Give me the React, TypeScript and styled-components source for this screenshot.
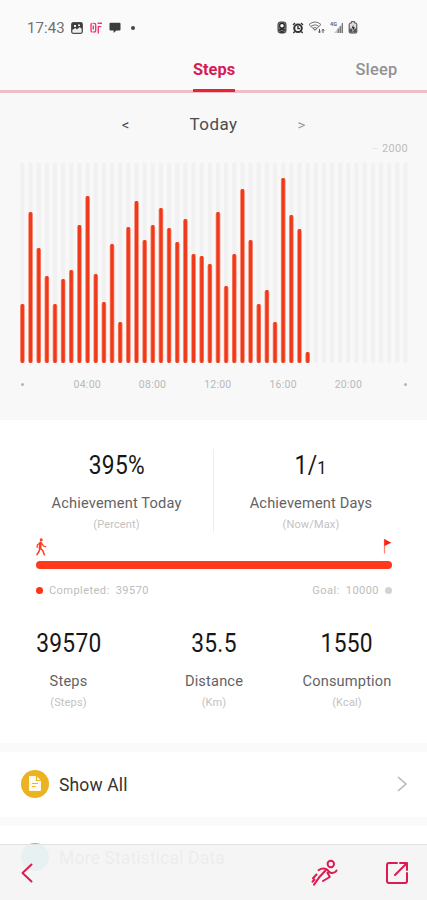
import React from "react";
import styled, { createGlobalStyle } from "styled-components";

const GlobalStyle = createGlobalStyle`
  * { box-sizing: border-box; }
  body { margin: 0; background: #fff; font-family: Roboto, "Liberation Sans", sans-serif; }
`;

const Screen = styled.div`
  position: relative;
  width: 427px;
  height: 900px;
  overflow: hidden;
  background: #fff;
`;

const Header = styled.header`
  background: #fafafa;
`;

const StatusBar = styled.div`
  display: flex;
  align-items: center;
  justify-content: space-between;
  height: 55px;
  padding: 0 69px 0 27px;
`;

const StatusGroup = styled.div<{ $gap: number }>`
  display: flex;
  align-items: center;
  gap: ${(p) => p.$gap}px;
`;

const Clock = styled.span`
  width: 38px;
  margin-right: -1px;
  font-size: 15px;
  letter-spacing: 0.1px;
  color: #707070;
  white-space: nowrap;
`;

const Dot = styled.span<{ $size: number; $color: string; $indent?: number }>`
  flex: none;
  width: ${(p) => p.$size}px;
  height: ${(p) => p.$size}px;
  margin-left: ${(p) => p.$indent ?? 0}px;
  border-radius: 50%;
  background: ${(p) => p.$color};
`;

const Tabs = styled.nav`
  display: grid;
  grid-template-columns: 193px 42px 1fr;
  height: 38px;
  border-bottom: 3px solid #edbfc8;
`;

const Tab = styled.button<{ $active?: boolean }>`
  grid-column: ${(p) => (p.$active ? 2 : 3)};
  justify-self: ${(p) => (p.$active ? "stretch" : "end")};
  height: 37px;
  margin: 0 ${(p) => (p.$active ? 0 : 29.5)}px 0 0;
  padding: 0 0 5px;
  border: 0;
  border-bottom: 3px solid ${(p) => (p.$active ? "#e32636" : "transparent")};
  background: none;
  color: ${(p) => (p.$active ? "#d81b55" : "#929292")};
  font: ${(p) => (p.$active ? 700 : 500)} 16.4px/29px Roboto, sans-serif;
  letter-spacing: ${(p) => (p.$active ? 0 : 0.25)}px;
  display: flex;
  justify-content: center;
`;

const ChartSection = styled.section`
  height: 327px;
  background: #f8f8f8;
`;

const DateRow = styled.div`
  display: grid;
  grid-template-columns: 20px 156px 20px;
  justify-content: center;
  align-items: center;
  text-align: center;
  height: 63px;
`;

const DateText = styled.span`
  padding-bottom: 2px;
  font-size: 17px;
  letter-spacing: 0.4px;
  color: #4c4c4c;
`;

const Step = styled.span<{ $color: string }>`
  font-size: 15px;
  color: ${(p) => p.$color};
`;

const Scale = styled.div`
  display: flex;
  justify-content: flex-end;
  gap: 3px;
  height: 20px;
  margin-top: -13px;
  padding-right: 19px;
  font-size: 11px;
  line-height: 11px;
  letter-spacing: 0.3px;
  color: #bdbdbd;
`;

const Dash = styled.span`
  color: #e4e4e4;
`;

const Plot = styled.svg`
  display: block;
`;

const Axis = styled.div`
  display: grid;
  grid-template-columns: 32.6px repeat(5, 65.3px) 51px;
  margin-top: 15px;
  padding-left: 22px;
  align-items: center;
  font-size: 10.5px;
  line-height: 13px;
  letter-spacing: 0.25px;
  color: #b8b8b8;
`;

const Hour = styled.span`
  text-align: center;
`;

const AxisEnd = styled.span<{ $end?: boolean }>`
  width: 3px;
  height: 3px;
  border-radius: 50%;
  background: #b4b4b4;
  margin-left: ${(p) => (p.$end ? 23 : -1)}px;
`;

const Summary = styled.section`
  height: 323px;
  padding-top: 29px;
`;

const Halves = styled.div`
  display: grid;
  grid-template-columns: 213px 1px 213px;
  height: 83px;
`;

const Divider = styled.div`
  background: #ededed;
`;

const Metric = styled.div<{ $shift?: number }>`
  display: flex;
  flex-direction: column;
  align-items: center;
  margin-left: ${(p) => p.$shift ?? 0}px;
`;

const Value = styled.div`
  height: 34px;
  font-size: 25px;
  line-height: 34px;
  letter-spacing: 0.3px;
  color: #171717;
  transform: scaleX(0.91);
`;

const Small = styled.span`
  font-size: 18px;
`;

const Label = styled.div`
  margin-top: 10px;
  font-size: 14.6px;
  line-height: 20px;
  letter-spacing: 0.17px;
  color: #636363;
`;

const Unit = styled.div`
  margin-top: 5px;
  font-size: 11px;
  line-height: 13px;
  letter-spacing: 0.15px;
  color: #c2c2c2;
`;

const Goal = styled.div`
  padding: 6px 35px 0 36px;
`;

const Row = styled.div`
  display: flex;
  align-items: center;
  justify-content: space-between;
`;

const Track = styled.div`
  height: 8px;
  margin: 5px 0 14px;
  border-radius: 4px;
  background: #ff3a1c;
`;

const Legend = styled.div`
  display: flex;
  align-items: center;
  gap: 6px;
  height: 14px;
  font-size: 11px;
  letter-spacing: 0.45px;
  word-spacing: 3px;
  color: #bdbdbd;
`;

const Thirds = styled.div`
  display: grid;
  grid-template-columns: 137px 154px 112px;
  padding-top: 30px;
`;

const Gap = styled.div`
  height: 9px;
  background: #fafafa;
`;

const ListRow = styled.div<{ $height: number }>`
  display: flex;
  align-items: center;
  height: ${(p) => p.$height}px;
  padding: 0 19px 2px 21px;
`;

const Badge = styled.span<{ $color: string }>`
  display: flex;
  align-items: center;
  justify-content: center;
  width: 28px;
  height: 28px;
  border-radius: 50%;
  background: ${(p) => p.$color};
`;

const ListText = styled.span<{ $muted?: boolean }>`
  flex: 1;
  margin-left: 10px;
  padding-top: 3px;
  font-size: 17.5px;
  letter-spacing: 0.15px;
  color: ${(p) => (p.$muted ? "#909090" : "#333")};
`;

const BottomBar = styled.footer`
  position: absolute;
  left: 0;
  right: 0;
  bottom: 0;
  display: flex;
  align-items: center;
  height: 56px;
  padding: 0 18px 0 19px;
  border-top: 1px solid #e2e2e2;
  background: rgba(244, 244, 244, 0.92);
`;

const BarIcon = styled.svg<{ $push?: boolean }>`
  flex: none;
  margin-left: ${(p) => (p.$push ? "auto" : 0)};
  margin-right: ${(p) => (p.$push ? 47 : 0)}px;
  fill: none;
  stroke: #dc1c50;
  stroke-width: 2;
  stroke-linecap: round;
  stroke-linejoin: round;
`;

const heights = [
  59, 151, 115, 87, 59, 84, 93, 138, 167, 89, 61, 119, 41, 136, 162, 123, 138, 155, 135, 121, 144,
  109, 107, 99, 151, 77, 109, 174, 123, 59, 73, 41, 185, 148, 134, 11,
];
const SLOT_COUNT = 48;
const FIRST_CENTER = 22.4;
const PITCH = 8.15;
const hours = ["04:00", "08:00", "12:00", "16:00", "20:00"];

const totals = [
  { value: "39570", label: "Steps", unit: "(Steps)" },
  { value: "35.5", label: "Distance", unit: "(Km)" },
  { value: "1550", label: "Consumption", unit: "(Kcal)" },
];

const StepsChart = () => (
  <Plot width="427" height="200" viewBox="0 0 427 200">
    {Array.from({ length: SLOT_COUNT }, (_, i) => (
      <rect key={i} x={FIRST_CENTER + i * PITCH - 2.1} y="0" width="4.2" height="200" fill="#f1f1f1" />
    ))}
    {heights.map((h, i) => (
      <g key={i}>
        <rect x={FIRST_CENTER + i * PITCH - 2.3} y={200 - h} width="4.6" height={h} rx="2" fill="#fa8068" />
        <rect x={FIRST_CENTER + i * PITCH - 1.5} y={200 - h} width="3" height={h} rx="1.4" fill="#ee3a1a" />
      </g>
    ))}
  </Plot>
);

const PhotoIcon = () => (
  <svg width="12" height="12" viewBox="0 0 12 12">
    <rect x=".7" y=".7" width="10.6" height="10.6" rx="1.5" fill="#eee" stroke="#4d4d4d" strokeWidth="1.3" />
    <path d="M1 1h10v6L8.7 5 6 7.5 4.5 6 1 8z" fill="#3e3e3e" />
    <path d="M3 3h2v2H3zM7 2.5h2V4H7z" fill="#eee" />
  </svg>
);

const FitIcon = () => (
  <svg width="12" height="12" viewBox="0 0 12 12" fill="none" stroke="#ec3a70" strokeWidth="1.4">
    <path d="M2.5 1.4Q1 1.4 1 3v5q0 2 1.5 2M3.3 1.4h.9q1.5 0 1.5 1.6v5q0 2-1.5 2h-.9M3.3 3.6v4M8.3 11.5V4.6h3M7.6 1.3H12" />
  </svg>
);

const ChatIcon = () => (
  <svg width="12" height="12" viewBox="0 0 12 12">
    <path d="M1.5.8h9q1 0 1 1v5.7q0 1-1 1H7.3L4.6 11V8.5H1.5q-1 0-1-1V1.8q0-1 1-1z" fill="#3c3c3c" />
  </svg>
);

const SaverIcon = () => (
  <svg width="10" height="13" viewBox="0 0 10 13">
    <rect x="1" y="1" width="8" height="11" rx="2.2" fill="#777" stroke="#444" />
    <circle cx="5" cy="4.7" r="2.3" fill="#fff" stroke="#222" strokeWidth="1.1" />
    <path d="M2 9.5 5 7.6l3 1.9M3.3 11h3.4" stroke="#222" strokeWidth="1.3" fill="none" />
  </svg>
);

const AlarmIcon = () => (
  <svg width="12" height="12" viewBox="0 0 12 12" fill="none" stroke="#343434">
    <circle cx="6" cy="6.3" r="3.8" strokeWidth="2" fill="#f5f5f5" />
    <path d="M6 4v2.6h2M1 3l2-1.9M11 3 9 1.1M2.7 9.5 1.4 11M9.3 9.5l1.3 1.5" strokeWidth="1.4" />
  </svg>
);

const WifiIcon = () => (
  <svg width="17" height="13" viewBox="0 0 17 13" fill="none" stroke="#777" strokeWidth="1">
    <path d="M1 3.5q6-5 12 0M3 5.5q4-3.2 8 0M5 7.3q2-1.5 4 0L7 9.2zM1 3.5l6 5.7 6-5.7" />
    <path d="M11.5 8v3.5M10.3 10.5l1.2 1.4 1.2-1.4M15 12V8.3M13.8 9.6 15 8.2l1.2 1.4" stroke="#555" />
  </svg>
);

const SignalText = styled.text`
  font: 700 5.5px Roboto, sans-serif;
  fill: #666;
`;

const SignalIcon = () => (
  <svg width="14" height="13" viewBox="0 0 14 13">
    <SignalText x="0" y="5">4G</SignalText>
    <path d="M4 12 13 2v10z" fill="#c7c7c7" />
    <path d="M8.3 12V7.5M10.3 12V5M12.4 12V2" stroke="#777" strokeWidth="1.2" />
  </svg>
);

const BatteryIcon = () => (
  <svg width="10" height="13" viewBox="0 0 10 13">
    <path d="M3.3.7h3.4v1.5h1.1q1 0 1 1V11q0 1-1 1H2.2q-1 0-1-1V3.2q0-1 1-1h1.1z" fill="#ddd" stroke="#444" />
    <path d="M1.5 7.5h7v4h-7z" fill="#555" />
    <path d="M5.7 2.7 3 7.5h1.7v3L7.5 6H5.7z" fill="#222" stroke="#fff" strokeWidth=".5" />
  </svg>
);

const WalkIcon = () => (
  <svg width="11" height="18" viewBox="0 0 11 18" fill="none" stroke="#ff3b1e" strokeLinecap="round" strokeLinejoin="round">
    <circle cx="5.2" cy="1.8" r="1.5" fill="#ff3b1e" stroke="none" />
    <path d="M4.6 4.7 4 10.2" strokeWidth="2.6" />
    <path d="M4 5 1.2 7v2.5M5.5 5.2 7.4 8l2.4.8" strokeWidth="1.2" />
    <path d="M3.8 10.4 3.2 13 1 16.7M4.7 10.4 7 13l1.3 3.7" strokeWidth="1.5" />
  </svg>
);

const FlagIcon = () => (
  <svg width="9" height="18" viewBox="0 0 9 18">
    <path d="M1.5 1V15.5" stroke="#ff8370" strokeWidth="1.2" />
    <path d="M1.3 1 8.4 4.8 1.3 8z" fill="#f7250e" />
  </svg>
);

export default function App() {
  return (
    <Screen>
      <GlobalStyle />
      <Header>
        <StatusBar>
          <StatusGroup $gap={7}>
            <Clock>17:43</Clock>
            <PhotoIcon />
            <FitIcon />
            <ChatIcon />
            <Dot $size={4} $color="#464646" $indent={3} />
          </StatusGroup>
          <StatusGroup $gap={4.5}>
            <SaverIcon />
            <AlarmIcon />
            <WifiIcon />
            <SignalIcon />
            <BatteryIcon />
          </StatusGroup>
        </StatusBar>
        <Tabs>
          <Tab $active>Steps</Tab>
          <Tab>Sleep</Tab>
        </Tabs>
      </Header>
      <ChartSection>
        <DateRow>
          <Step $color="#484848">&lt;</Step>
          <DateText>Today</DateText>
          <Step $color="#9c9c9c">&gt;</Step>
        </DateRow>
        <Scale>
          <Dash>–</Dash>
          <span>2000</span>
        </Scale>
        <StepsChart />
        <Axis>
          <AxisEnd />
          {hours.map((h) => (
            <Hour key={h}>{h}</Hour>
          ))}
          <AxisEnd $end />
        </Axis>
      </ChartSection>
      <Summary>
        <Halves>
          <Metric $shift={20}>
            <Value>395%</Value>
            <Label>Achievement Today</Label>
            <Unit>(Percent)</Unit>
          </Metric>
          <Divider />
          <Metric $shift={-19}>
            <Value>
              1/<Small>1</Small>
            </Value>
            <Label>Achievement Days</Label>
            <Unit>(Now/Max)</Unit>
          </Metric>
        </Halves>
        <Goal>
          <Row>
            <WalkIcon />
            <FlagIcon />
          </Row>
          <Track />
          <Row>
            <Legend>
              <Dot $size={7} $color="#ff3214" />
              Completed: 39570
            </Legend>
            <Legend>
              Goal: 10000
              <Dot $size={7} $color="#d3d3d3" />
            </Legend>
          </Row>
        </Goal>
        <Thirds>
          {totals.map((t) => (
            <Metric key={t.label}>
              <Value>{t.value}</Value>
              <Label>{t.label}</Label>
              <Unit>{t.unit}</Unit>
            </Metric>
          ))}
        </Thirds>
      </Summary>
      <Gap />
      <ListRow $height={65}>
        <Badge $color="#ebb321">
          <svg width="14" height="17" viewBox="0 0 14 17">
            <path d="M2 1h6.5L13 5.5V15q0 1-1 1H2q-1 0-1-1V2q0-1 1-1z" fill="#fffaf0" />
            <path d="M8.5 1v4.5H13M4 8.5h6M4 11.5h3.5" stroke="#ebb321" strokeWidth="1.2" fill="none" />
          </svg>
        </Badge>
        <ListText>Show All</ListText>
        <svg width="12" height="18" viewBox="0 0 12 18" fill="none" stroke="#b5b5b5" strokeWidth="1.5">
          <path d="m2 2 8 7-8 7" />
        </svg>
      </ListRow>
      <Gap />
      <ListRow $height={63}>
        <Badge $color="#55cfcb" />
        <ListText $muted>More Statistical Data</ListText>
      </ListRow>
      <BottomBar>
        <BarIcon width="16" height="20" viewBox="0 0 16 20">
          <path d="M12.5 1.5 3.5 10l9 8.5" />
        </BarIcon>
        <BarIcon $push width="29" height="28" viewBox="0 0 29 28">
          <circle cx="21.8" cy="5" r="3.2" />
          <path d="M9.5 11.2q3.5-2.4 7.5-1.2c3 1 2.5 4.5 6 4q3.8-.5 4.5-2.5M16.5 11.5l-5.8 6.2L5 25.7M18.5 13.7l2.3 4.3-6.8 4M7.5 15.5 4 19.3M5.5 20.5l-2 2.2" />
        </BarIcon>
        <BarIcon width="24" height="24" viewBox="0 0 24 24">
          <path d="M12 2H4Q2 2 2 4v16q0 2 2 2h16q2 0 2-2v-8M15 2h7v7M21.5 2.5 10 14" />
        </BarIcon>
      </BottomBar>
    </Screen>
  );
}
